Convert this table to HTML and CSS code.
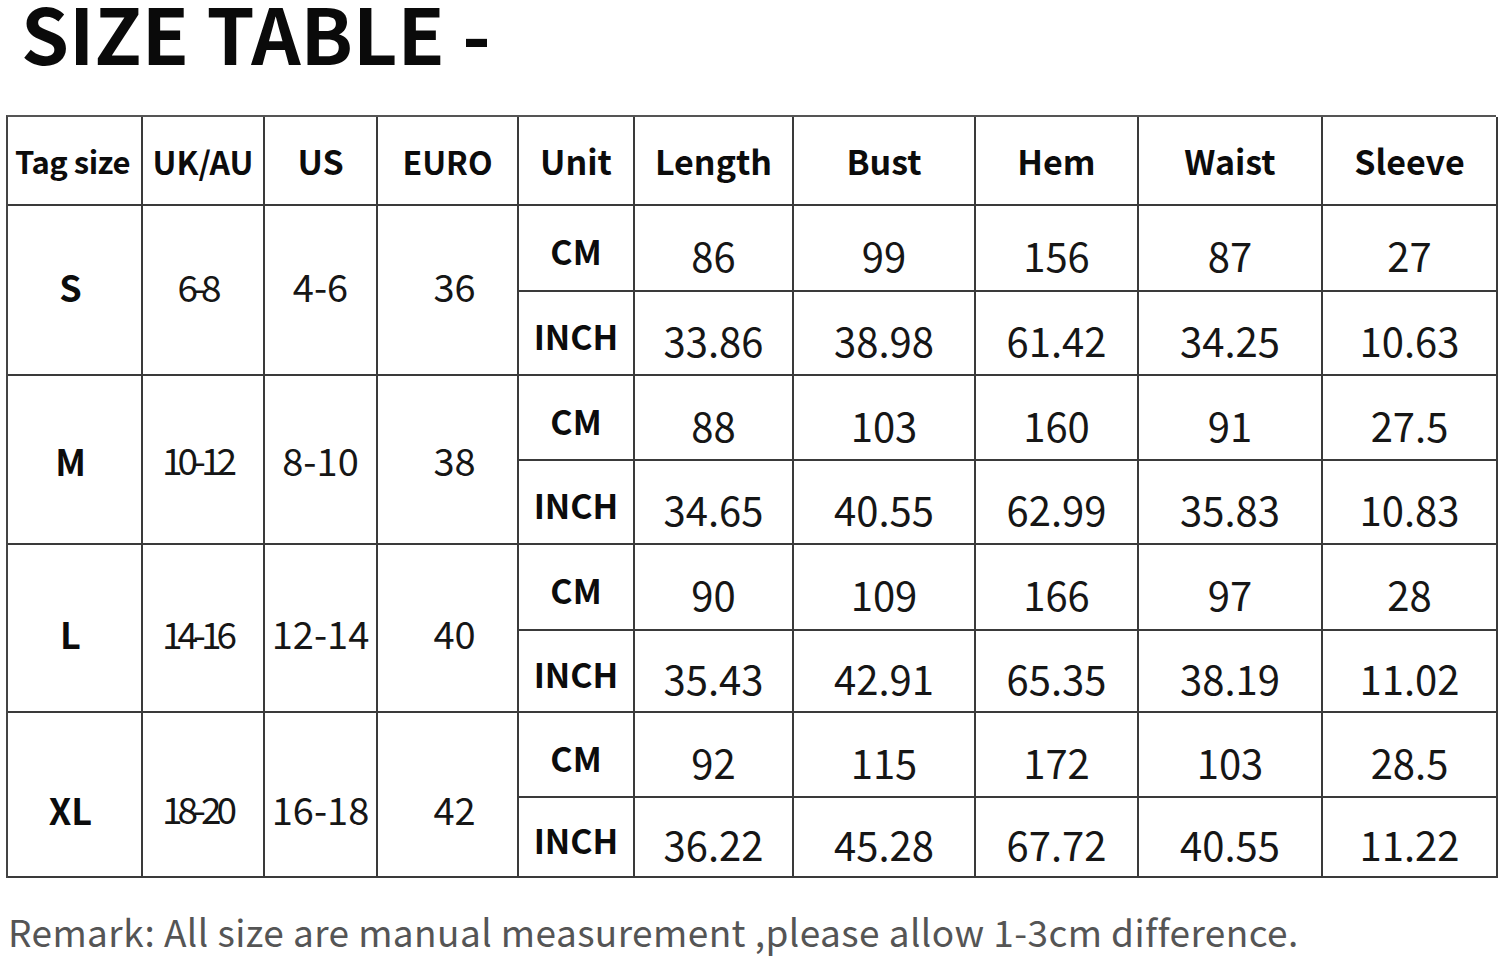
FILE: index.html
```html
<!DOCTYPE html>
<html>
<head>
<meta charset="utf-8">
<link rel="stylesheet" href="styles.css">
</head>
<body>
<div class="page">
  <h1 class="title">SIZE TABLE -</h1>
  <div class="table">
    <div class="cell head tag">Tag size</div>
    <div class="cell head mid">UK/AU</div>
    <div class="cell head">US</div>
    <div class="cell head mid">EURO</div>
    <div class="cell head">Unit</div>
    <div class="cell head">Length</div>
    <div class="cell head">Bust</div>
    <div class="cell head">Hem</div>
    <div class="cell head">Waist</div>
    <div class="cell head">Sleeve</div>

    <div class="cell span sz g1">S</div>
    <div class="cell span tight g1">6-8</div>
    <div class="cell span num g1">4-6</div>
    <div class="cell span num eu g1">36</div>
    <div class="cell unit">CM</div>
    <div class="cell val">86</div><div class="cell val">99</div><div class="cell val">156</div><div class="cell val">87</div><div class="cell val">27</div>
    <div class="cell unit">INCH</div>
    <div class="cell val">33.86</div><div class="cell val">38.98</div><div class="cell val">61.42</div><div class="cell val">34.25</div><div class="cell val">10.63</div>

    <div class="cell span sz g2">M</div>
    <div class="cell span tight g2">10-12</div>
    <div class="cell span num g2">8-10</div>
    <div class="cell span num eu g2">38</div>
    <div class="cell unit">CM</div>
    <div class="cell val">88</div><div class="cell val">103</div><div class="cell val">160</div><div class="cell val">91</div><div class="cell val">27.5</div>
    <div class="cell unit">INCH</div>
    <div class="cell val">34.65</div><div class="cell val">40.55</div><div class="cell val">62.99</div><div class="cell val">35.83</div><div class="cell val">10.83</div>

    <div class="cell span sz g3">L</div>
    <div class="cell span tight g3">14-16</div>
    <div class="cell span num g3">12-14</div>
    <div class="cell span num eu g3">40</div>
    <div class="cell unit">CM</div>
    <div class="cell val">90</div><div class="cell val">109</div><div class="cell val">166</div><div class="cell val">97</div><div class="cell val">28</div>
    <div class="cell unit">INCH</div>
    <div class="cell val">35.43</div><div class="cell val">42.91</div><div class="cell val">65.35</div><div class="cell val">38.19</div><div class="cell val">11.02</div>

    <div class="cell span sz g4">XL</div>
    <div class="cell span tight g4">18-20</div>
    <div class="cell span num g4">16-18</div>
    <div class="cell span num eu g4">42</div>
    <div class="cell unit">CM</div>
    <div class="cell val">92</div><div class="cell val">115</div><div class="cell val">172</div><div class="cell val">103</div><div class="cell val">28.5</div>
    <div class="cell unit">INCH</div>
    <div class="cell val">36.22</div><div class="cell val">45.28</div><div class="cell val">67.72</div><div class="cell val">40.55</div><div class="cell val">11.22</div>
  </div>
  <p class="remark">Remark: All size are manual measurement ,please allow 1-3cm difference.</p>
</div>
</body>
</html>
```

FILE: styles.css
```css
html, body {
  margin: 0;
  padding: 0;
  background: #ffffff;
}

body {
  font-family: "Noto Sans CJK SC", "Noto Sans", sans-serif;
  color: #111;
  width: 1500px;
  height: 958px;
  overflow: hidden;
}

.page {
  padding: 0 4px 0 6px;
}

.title {
  margin: 0 0 0 15px;
  font-size: 77px;
  line-height: 64px;
  font-weight: 700;
  color: #0a0a0a;
  height: 115px;
}

.table {
  display: grid;
  grid-template-columns: 135px 122px 113px 141px 116px 159px 182px 163px 184px 175px;
  grid-template-rows: 89px 86px 84px 85px 84px 86px 82px 85px 80px;
  border-left: 2px solid #444;
  border-top: 2px solid #555;
  width: 1490px;
  box-sizing: border-box;
}

.cell {
  border-right: 2px solid #3a3a3a;
  border-bottom: 2px solid #3a3a3a;
  display: flex;
  align-items: center;
  justify-content: center;
  box-sizing: border-box;
  line-height: 1;
  font-size: 38px;
  color: #161616;
  white-space: nowrap;
}

.head {
  font-weight: 700;
  font-size: 34px;
  color: #0c0c0c;
}

.head.tag {
  font-size: 31px;
  letter-spacing: -0.5px;
  padding-right: 4px;
}

.head.mid {
  font-size: 32px;
}

.span {
  grid-row: span 2;
}

.sz {
  font-weight: 700;
  font-size: 36px;
  color: #0c0c0c;
}

.tight {
  letter-spacing: -5px;
  font-size: 37px;
  padding-right: 12px;
}

.num {
  font-size: 38px;
}

.eu {
  padding-left: 14px;
}

.g1 { padding-bottom: 8px; }
.g2 { padding-top: 0; }
.g3 { padding-top: 10px; }
.g4 { padding-top: 28px; }

.sz.g1, .sz.g2, .sz.g3, .sz.g4 {
  padding-right: 8px;
}

.unit {
  font-weight: 700;
  font-size: 34px;
  padding-top: 6px;
  color: #0c0c0c;
}

.val {
  font-size: 40px;
  padding-top: 14px;
}

.remark {
  margin: 35px 0 0 2px;
  font-size: 37px;
  line-height: 1;
  letter-spacing: 0.42px;
  color: #555;
  white-space: nowrap;
}
```
